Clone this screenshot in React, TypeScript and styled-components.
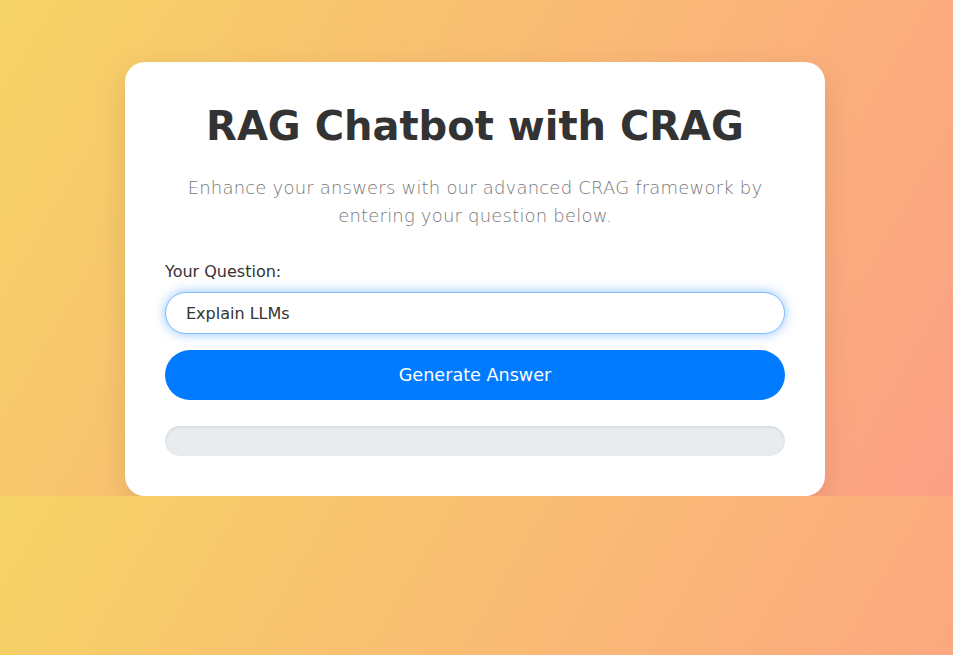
import React from "react";
import styled, { createGlobalStyle } from "styled-components";

const GlobalStyle = createGlobalStyle`
  html {
    margin: 0;
  }
  body {
    margin: 0;
    padding: 62px 3px 0 0;
    background: linear-gradient(120deg, #f6d365 0%, #fda085 100%);
    font-family: "DejaVu Sans", "Liberation Sans", sans-serif;
  }
`;

const Card = styled.main`
  width: 700px;
  box-sizing: border-box;
  margin: 0 auto;
  padding: 40px;
  background: #ffffff;
  border-radius: 20px;
  box-shadow: 0 10px 30px rgba(0, 0, 0, 0.1);
  display: flex;
  flex-direction: column;
`;

const Title = styled.h1`
  margin: 0;
  font-size: 40px;
  font-weight: bold;
  color: #333333;
  text-align: center;
  line-height: 48px;
`;

const Subtitle = styled.p`
  margin: 24px 0 0;
  font-size: 18px;
  font-weight: 300;
  line-height: 28px;
  color: #777777;
  text-align: center;
  letter-spacing: 0.2px;
`;

const Form = styled.form`
  margin-top: 33px;
  display: flex;
  flex-direction: column;
`;

const Label = styled.label`
  font-size: 16px;
  line-height: 18px;
  color: #333333;
  margin-bottom: 11px;
`;

const Input = styled.input`
  box-sizing: border-box;
  height: 42px;
  padding: 0 20px;
  border: 1px solid #80bdff;
  border-radius: 21px;
  font-family: inherit;
  font-size: 16px;
  color: #333333;
  outline: none;
  box-shadow: 0 0 12px rgba(0, 123, 255, 0.45);
`;

const Button = styled.button`
  margin-top: 16px;
  height: 50px;
  border: none;
  border-radius: 25px;
  background: #007bff;
  color: #ffffff;
  font-family: inherit;
  font-size: 17.6px;
  cursor: pointer;
`;

const Progress = styled.div`
  margin-top: 26px;
  height: 30px;
  border-radius: 15px;
  background: #e9ecef;
  box-shadow: inset 0 1px 3px rgba(0, 0, 0, 0.1);
  overflow: hidden;
`;

const Fill = styled.div`
  height: 100%;
  background: #007bff;
  border-radius: 15px;
`;

export default function App() {
  const progress = 0;
  return (
    <>
      <GlobalStyle />
      <Card>
        <Title>RAG Chatbot with CRAG</Title>
        <Subtitle>
          Enhance your answers with our advanced CRAG framework by entering your question below.
        </Subtitle>
        <Form onSubmit={(e) => e.preventDefault()}>
          <Label htmlFor="q">Your Question:</Label>
          <Input id="q" defaultValue="Explain LLMs" />
          <Button type="submit">Generate Answer</Button>
          <Progress>
            <Fill style={{ width: `${progress}%` }} />
          </Progress>
        </Form>
      </Card>
    </>
  );
}
